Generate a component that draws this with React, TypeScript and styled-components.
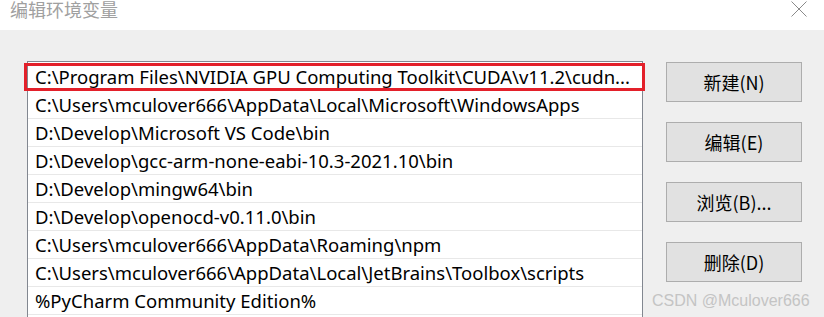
import styled, { createGlobalStyle } from 'styled-components';

const GlobalStyle = createGlobalStyle`
  html, body {
    margin: 0;
    padding: 0;
    width: 824px;
    height: 317px;
    overflow: hidden;
    background: #efefef;
  }
`;

const paths = [
  'C:\\Program Files\\NVIDIA GPU Computing Toolkit\\CUDA\\v11.2\\cudn...',
  'C:\\Users\\mculover666\\AppData\\Local\\Microsoft\\WindowsApps',
  'D:\\Develop\\Microsoft VS Code\\bin',
  'D:\\Develop\\gcc-arm-none-eabi-10.3-2021.10\\bin',
  'D:\\Develop\\mingw64\\bin',
  'D:\\Develop\\openocd-v0.11.0\\bin',
  'C:\\Users\\mculover666\\AppData\\Roaming\\npm',
  'C:\\Users\\mculover666\\AppData\\Local\\JetBrains\\Toolbox\\scripts',
  '%PyCharm Community Edition%',
  '',
];

const buttons = ['新建(N)', '编辑(E)', '浏览(B)...', '删除(D)'];

const Window = styled.div`
  position: relative;
  width: 824px;
  height: 317px;
  display: flex;
  flex-direction: column;
  font-family: 'Noto Sans', 'Noto Sans CJK SC', sans-serif;
  overflow: hidden;
`;

const TitleBar = styled.div`
  height: 30px;
  flex: none;
  background: #fff;
  display: flex;
  align-items: flex-start;
  justify-content: space-between;
  padding: 0 17px 0 10px;
  box-sizing: border-box;
`;

const Title = styled.div`
  font-family: 'Noto Sans CJK SC', sans-serif;
  font-size: 18px;
  line-height: 18px;
  color: #a0a0a0;
`;

const CloseIcon = styled.svg`
  margin-top: 1px;
`;

const Body = styled.div`
  flex: 1;
  display: flex;
  align-items: flex-start;
  gap: 23px;
  padding: 31px 0 0 27px;
`;

const List = styled.div`
  width: 614px;
  flex: none;
  background: #fff;
  border: 1px solid #828790;
  border-bottom: none;
  padding-top: 1px;
  display: flex;
  flex-direction: column;
`;

const Row = styled.div`
  position: relative;
  height: 27px;
  border-bottom: 1px solid #e8e8e8;
  padding-left: 7px;
  display: flex;
  align-items: center;
  font-size: 18.5px;
  color: #000;
  white-space: nowrap;
`;

const Highlight = styled.div`
  position: absolute;
  left: -4px;
  right: -3px;
  top: 0;
  bottom: -1px;
  border: 3px solid #e3202a;
  pointer-events: none;
`;

const ButtonColumn = styled.div`
  display: flex;
  flex-direction: column;
  gap: 20px;
  padding-top: 1px;
`;

const Button = styled.button`
  width: 136px;
  height: 40px;
  background: #e1e1e1;
  border: 1px solid #adadad;
  font-family: 'Noto Sans CJK SC', sans-serif;
  font-size: 18px;
  color: #000;
  padding: 0;
`;

const Watermark = styled.div`
  position: absolute;
  left: 652px;
  top: 292px;
  font-family: 'Liberation Sans', Arial, sans-serif;
  font-size: 16px;
  color: #c4c4c4;
`;

export default function App() {
  return (
    <>
      <GlobalStyle />
      <Window>
        <TitleBar>
          <Title>编辑环境变量</Title>
          <CloseIcon width="16" height="16" viewBox="0 0 16 16">
            <path d="M0.5 0.5 L15.5 15.5 M15.5 0.5 L0.5 15.5" stroke="#8a8a8a" strokeWidth="1" fill="none" />
          </CloseIcon>
        </TitleBar>
        <Body>
          <List>
            {paths.map((p, i) => (
              <Row key={i}>
                {p}
                {i === 0 && <Highlight />}
              </Row>
            ))}
          </List>
          <ButtonColumn>
            {buttons.map((b) => (
              <Button key={b}>{b}</Button>
            ))}
          </ButtonColumn>
        </Body>
        <Watermark>CSDN @Mculover666</Watermark>
      </Window>
    </>
  );
}
